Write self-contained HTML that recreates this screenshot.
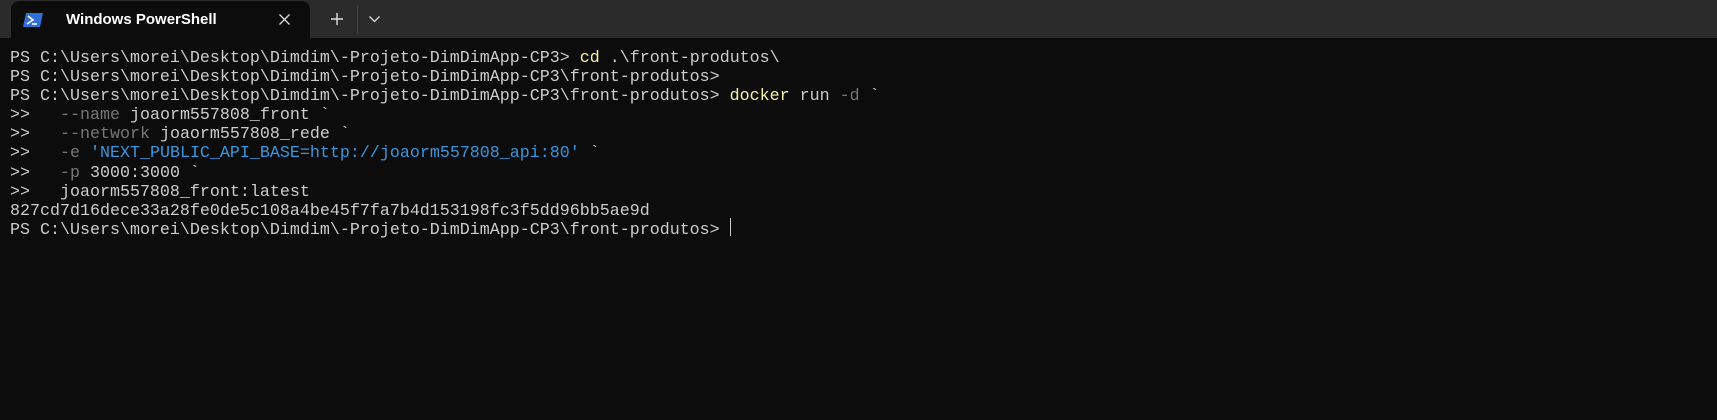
<!DOCTYPE html>
<html><head><meta charset="utf-8"><style>
html,body{margin:0;padding:0;width:1717px;height:420px;overflow:hidden;background:#0c0c0c}
.bar{position:absolute;left:0;top:0;width:1717px;height:38px;background:#2b2b2b}
.tab{position:absolute;left:11px;top:1px;width:299px;height:37px;background:#0c0c0c;border-radius:8px 8px 0 0}
.title{position:absolute;left:55px;top:10px;font:600 15px "Liberation Sans",sans-serif;color:#fff}
.term{position:absolute;left:10px;top:49px;font:16.67px/19.1px "Liberation Mono",monospace;color:#cccccc;white-space:pre}
.y{color:#f9f1a5}.g{color:#767676}.b{color:#3a96dd}
.cur{position:relative;display:inline-block;width:1px;height:1px}
.cur i{position:absolute;left:0;top:-15px;width:1px;height:18px;background:#ccc}
</style></head><body>
<div class="bar">
<div class="tab">
<svg style="position:absolute;left:12px;top:12px" width="20" height="14" viewBox="0 0 20 14"><path d="M3 0H20L17 14H0Z" fill="#2f6fd6"/><path d="M5 3L10 7L4 11" stroke="#fff" stroke-width="1.6" fill="none"/><path d="M9 11H14" stroke="#fff" stroke-width="1.6"/></svg>
<div class="title">Windows PowerShell</div>
<svg style="position:absolute;left:268px;top:13px" width="11" height="11"><path d="M0.5 0.5L10.5 10.5M10.5 0.5L0.5 10.5" stroke="#ddd" stroke-width="1.3"/></svg>
</div>
<svg style="position:absolute;left:331px;top:13px" width="12" height="12"><path d="M6 0V12M0 6H12" stroke="#ddd" stroke-width="1.4"/></svg>
<div style="position:absolute;left:357px;top:6px;width:1px;height:27px;background:#444"></div>
<svg style="position:absolute;left:369px;top:16px" width="11" height="7"><path d="M0.5 0.5L5.5 5.5L10.5 0.5" stroke="#ddd" stroke-width="1.3" fill="none"/></svg>
</div>
<div class="term">PS C:\Users\morei\Desktop\Dimdim\-Projeto-DimDimApp-CP3&gt; <span class="y">cd</span> .\front-produtos\
PS C:\Users\morei\Desktop\Dimdim\-Projeto-DimDimApp-CP3\front-produtos&gt;
PS C:\Users\morei\Desktop\Dimdim\-Projeto-DimDimApp-CP3\front-produtos&gt; <span class="y">docker</span> run <span class="g">-d</span> `
&gt;&gt;   <span class="g">--name</span> joaorm557808_front `
&gt;&gt;   <span class="g">--network</span> joaorm557808_rede `
&gt;&gt;   <span class="g">-e</span> <span class="b">'NEXT_PUBLIC_API_BASE=http://joaorm557808_api:80'</span> `
&gt;&gt;   <span class="g">-p</span> 3000:3000 `
&gt;&gt;   joaorm557808_front:latest
827cd7d16dece33a28fe0de5c108a4be45f7fa7b4d153198fc3f5dd96bb5ae9d
PS C:\Users\morei\Desktop\Dimdim\-Projeto-DimDimApp-CP3\front-produtos&gt; <span class="cur"><i></i></span></div>
</body></html>
